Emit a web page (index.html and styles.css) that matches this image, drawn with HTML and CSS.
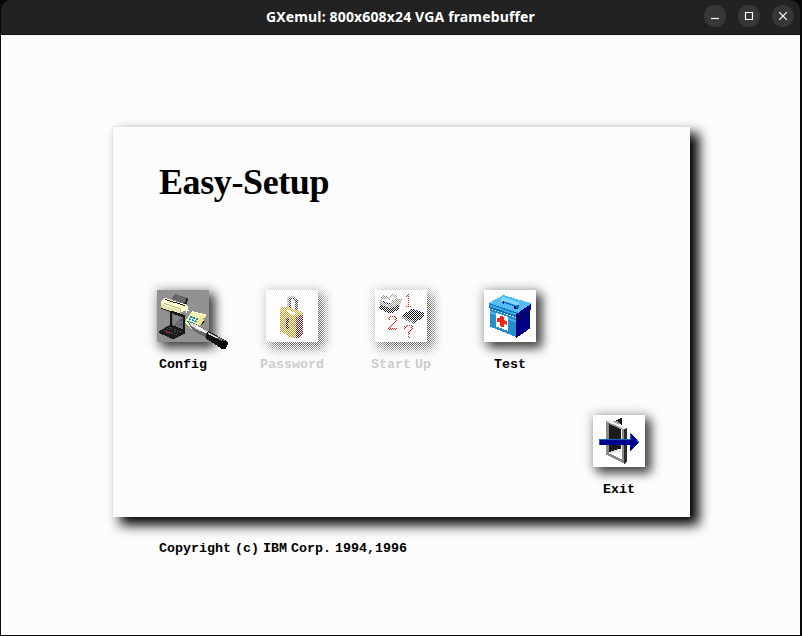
FILE: index.html
```html
<!DOCTYPE html>
<html lang="en">
<head>
<meta charset="utf-8">
<title>GXemul: 800x608x24 VGA framebuffer</title>
<link rel="stylesheet" href="styles.css">
</head>
<body>
<div class="window">
  <header class="titlebar">
    <h1 class="caption">GXemul: 800x608x24 VGA framebuffer</h1>
    <div class="controls">
      <button class="control" aria-label="Minimize"><svg viewBox="0 0 22 22"><path d="M7 13.5h8"/></svg></button>
      <button class="control" aria-label="Maximize"><svg viewBox="0 0 22 22"><path d="M7.5 7.5h7v7h-7z"/></svg></button>
      <button class="control" aria-label="Close"><svg viewBox="0 0 22 22"><path d="M7.2 7.2l7.6 7.6M14.8 7.2l-7.6 7.6"/></svg></button>
    </div>
  </header>
  <main class="screen">
    <section class="panel">
      <h2 class="heading">Easy-Setup</h2>
      <div class="icons">
        <div class="item">
          <div class="tile tile-selected">
            <svg class="art" viewBox="36 30 156 156" shape-rendering="crispEdges">
              <path fill="#666" d="M81 57l9-15 39 12-10 18z"/>
              <path fill="#222" d="M117 72l8-18h6l-8 21z"/>
              <path fill="#ffffd8" d="M48 63l12-9 64 20 6 7-2 8-18 7-60-18z"/>
              <path fill="#e6e2b0" d="M48 72l60 18v12l-60-18z"/>
              <path fill="#222" d="M60 57l60 18v3l-60-18zM48 84l30 10v3l-30-10z"/>
              <path fill="#b8b488" d="M57 69l48 15v3l-48-15zM105 87h3v15h-3z"/>
              <path fill="#fffff0" d="M114 90h18v4h-18zM122 83h5v15h-5z"/>
              <path fill="#161616" d="M74 96l10-3 36 13v51l-42-19-3-5z"/>
              <path fill="#6e6e6e" d="M81 100l33 11v37l-33-13z"/>
              <path fill="#858585" d="M84 104l23 8-20 23-3-2z"/>
              <path fill="#23239c" d="M107 118h4v5h-4zM107 131h4v5h-4z"/>
              <path fill="#1b1b1b" d="M42 153l33-18 45 19v6l-35 18-43-19z"/>
              <path fill="none" stroke="#666" stroke-width="2" stroke-dasharray="5 3" d="M57 150l38 15M65 145l38 15M73 141l38 15"/>
              <path fill="#e11919" d="M63 154l12 5v3l-12-5z"/>
              <path fill="#f5eca0" d="M123 120l17-25 43 11-2 7-11 4-18 28-13 1-18-16z"/>
              <path fill="#ffffdc" d="M140 93l43 10v6l-43-11z"/>
              <path fill="#222" d="M170 121l11 4-12 11z"/>
              <path fill="#eee18b" d="M164 112l15 5-17 26-10-5z"/>
              <path fill="#f8f2b0" d="M137 103l27 9-14 23-27-10z"/>
              <path fill="none" stroke="#1484d3" stroke-width="5" stroke-dasharray="7 2" d="M136 110l24 8M132 117l24 8M127 124l24 8"/>
              <path fill="#666" d="M132 130l20 1 39 24-9 18-31-18-17-17z"/>
              <path fill="#ddd" d="M132 128l20 5 37 22-5 6-33-15-14-10z"/>
              <path fill="#fff" d="M153 136l29 17-3 4-25-14z"/>
              <path fill="#111" d="M190 154l57 29 3 9-8 14-9 2-51-33 1-12z"/>
              <path fill="#777" d="M190 157l54 27-3 4-53-27z"/>
              <path fill="#ddd" d="M190 158l28 14-2 3-28-14z"/>
              <path fill="#000" d="M231 181l17 2-8 24-9 1-8-7z"/>
            </svg>
          </div>
          <span class="label">Config</span>
        </div>
        <div class="item item-disabled">
          <div class="tile">
            <svg class="art" viewBox="48 30 156 156" shape-rendering="crispEdges">
              <path fill="none" stroke="#444" stroke-width="9" d="M117 99V57l5-6h9l9 9v42"/>
              <path fill="none" stroke="#aaa" stroke-width="5" d="M114 96V54l6-4h12l6 9"/>
              <path fill="#dda927" d="M90 89l9-9h14l46 16v9l-21 13-48-18z"/>
              <path fill="#fff" d="M105 92l12-1 24 8-9 8z"/>
              <path fill="#cb9a18" d="M90 95l48 18v60h-13l-35-18z"/>
              <path fill="#6b1c1a" d="M138 113l21-11v63l-15 9h-6z"/>
              <path fill="#111" d="M108 115h9v12l-3 3 4 18-9-4z"/>
            </svg>
          </div>
          <span class="label">Password</span>
        </div>
        <div class="item item-disabled">
          <div class="tile">
            <svg class="art" viewBox="45 30 156 156" shape-rendering="crispEdges">
              <path fill="#999" d="M63 51l9-6 15 6 6-9 19 4v9l17 3-9 12-4 19-25 12-27-13-5-14z"/>
              <path fill="#f4f4f4" d="M75 55l22 7-6 9-25-9zM93 48l14 4-6 9-13-4z"/>
              <path fill="#161616" d="M59 74l33 11 26-12v15l-27 13-33-14z"/>
              <path fill="#00e" d="M70 63h6v5h-6zM82 68h9v5h-9z"/>
              <path fill="#111" d="M127 105l31-19 34 11v13l-29 20-36-15z"/>
              <path fill="#777" d="M127 108l34 14v9l-34-14z"/>
              <path fill="#00d" d="M159 88l27 9v4l-27-9z"/>
              <path class="mark" d="M136 51l9-7v34M136 79h17M86 121v-7l6-5h12l4 5v10l-22 19v3h24M135 147v-6l7-5h10l5 6v6l-11 9v7M143 171h6"/>
            </svg>
          </div>
          <span class="label">Start Up</span>
        </div>
        <div class="item">
          <div class="tile">
            <svg class="art" viewBox="42 30 156 156" shape-rendering="crispEdges">
              <path fill="#52bdf2" d="M57 69l43-24 84 25-42 34z"/>
              <path fill="#0872ba" d="M57 69l84 29v15L57 84z"/>
              <path fill="#3da6df" d="M57 72l84 30v6L57 78z"/>
              <path fill="#258fce" d="M60 86l81 29v57L60 140z"/>
              <path fill="#46b4ed" d="M60 93l78 29v5L60 99z"/>
              <path fill="#000086" d="M138 103l46-32v14l-4 3v57l-41 29z"/>
              <path fill="#151515" d="M138 117l45-30v3l-45 31z"/>
              <path fill="#000a80" d="M94 67V58l8 2v12zM131 79h13v7h-13z"/>
              <path fill="#0c6cb8" d="M102 64l32 11v4l-32-10zM139 74h8v11h-8z"/>
              <path fill="#83d8ff" d="M94 54l8-2 45 16v7h-8L99 61v5h-5z"/>
              <path fill="#fff" d="M78 99l36 12v42l-36-14z"/>
              <path fill="#f22812" d="M90 107l12 4v9l9 4v11l-9-3v11l-12-4v-11l-9-4v-11l9 3z"/>
            </svg>
          </div>
          <span class="label">Test</span>
        </div>
      </div>
      <div class="item item-exit">
        <div class="tile">
          <svg class="art" viewBox="39 30 156 156" shape-rendering="crispEdges">
            <path fill="#1b1b1b" d="M102 49l23-11v21z"/>
            <path fill="#999" d="M96 50l15-3 10 9v7z"/>
            <path fill="#1b1b1b" d="M86 56l38 17v57l-38 13z"/>
            <path fill="#8b8b8b" fill-rule="evenodd" d="M78 45l57 24v108l-57-28zM86 57v86l40 20V74z"/>
            <path fill="#eee" d="M78 45l6-3 57 27-8 4-53-24z"/>
            <path fill="#2b2b2b" d="M132 72l9-3v102l-9 6z"/>
            <path fill="#ddd" d="M86 142l28-9 12 7v3l-13-5-24 9z"/>
            <path fill="#000090" d="M57 102h93V84l29 28-29 27v-19H57z"/>
            <path fill="#1265c5" d="M57 102h93V84l4 4v18H61v14h-4zM171 103l8 8-3 3-7-7z"/>
          </svg>
        </div>
        <span class="label">Exit</span>
      </div>
    </section>
    <p class="copyright">Copyright (c) IBM Corp. 1994,1996</p>
  </main>
</div>
</body>
</html>
```
FILE: styles.css
```css
* { box-sizing: border-box; }
body { margin: 0; background: #090909; }
h1, h2, p { margin: 0; }

.window {
  width: 802px;
  height: 636px;
  border: solid #090909;
  border-width: 0 2px 1px 1px;
  display: flex;
  flex-direction: column;
}

.titlebar {
  height: 35px;
  flex: none;
  display: grid;
  grid-template-columns: 1fr auto 1fr;
  align-items: center;
  padding: 0 6px 2px;
  background: #222;
  border-bottom: 1px solid #121212;
  border-radius: 10px 10px 0 0;
}
.caption {
  grid-column: 2;
  font: bold 14px/20px "Noto Sans", sans-serif;
  letter-spacing: 0.15px;
  padding-top: 1px;
  color: #fff;
  white-space: nowrap;
}
.controls {
  display: flex;
  justify-content: flex-end;
  gap: 12px;
}
.control {
  width: 22px;
  height: 22px;
  padding: 0;
  border: 0;
  border-radius: 50%;
  background: #373737;
}
.control svg {
  display: block;
  fill: none;
  stroke: #fff;
  stroke-width: 1.2;
}

.screen {
  flex: 1;
  padding: 92px 0 0 112px;
  background: #fcfcfc;
}
.panel {
  width: 577px;
  height: 390px;
  padding: 33px 44px 0;
  background: #fcfcfc;
  box-shadow: 8px 7px 11px #000, -1px -1px 0 #f0f0f0, 8px 7px 12px 3px #ccc;
}
.heading {
  font: bold 36px/44px "Liberation Serif", serif;
  letter-spacing: -0.4px;
  color: #000;
  padding-left: 2px;
  white-space: nowrap;
}
.icons {
  display: flex;
  gap: 57px;
  margin-top: 86px;
}
.item {
  width: 52px;
  display: flex;
  flex-direction: column;
  align-items: center;
}
.item-exit {
  margin: 42px 0 0 436px;
}
.tile {
  position: relative;
  width: 52px;
  height: 52px;
  background: #fff;
  box-shadow: 5px 5px 10px 1px #444, 0 0 9px 3px #ddd;
}
.tile-selected { background: #919191; }
.item-disabled .tile::after {
  content: "";
  position: absolute;
  inset: -10px -20px -20px -10px;
  background: repeating-conic-gradient(transparent 0 25%, #fcfcfc 0 50%) 0 0 / 2px 2px;
}
.art {
  display: block;
  width: 52px;
  height: 52px;
  overflow: visible;
}
.mark {
  fill: none;
  stroke: #f42308;
  stroke-width: 5;
}
.label, .copyright {
  font: bold 13.33px/16px "Liberation Mono", monospace;
  color: #000;
  word-spacing: -4px;
  white-space: nowrap;
}
.label {
  position: relative;
  margin-top: 15px;
}
.item-disabled .label { color: #ccc; }
.copyright { margin: 24px 0 0 46px; }
```
